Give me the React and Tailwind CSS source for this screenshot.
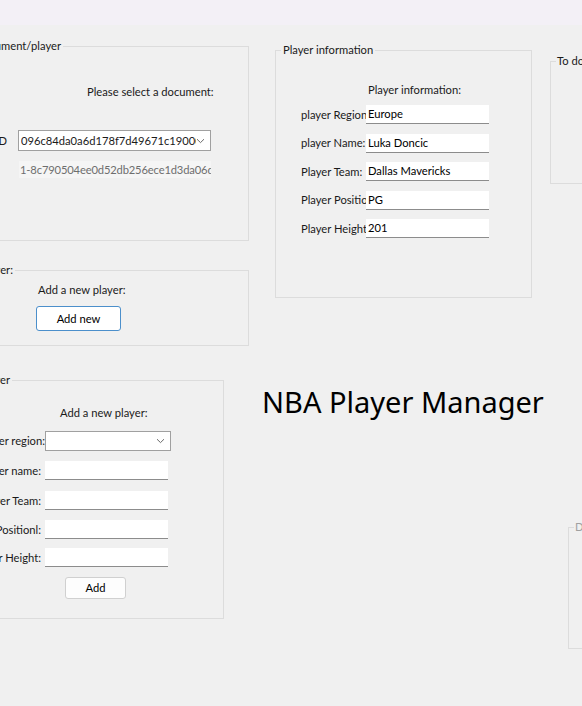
import React from "react";

const font = { fontFamily: 'Lato, "Noto Sans", sans-serif' };
const titleFont = { fontFamily: '"Noto Sans", "Open Sans", sans-serif' };

function Chevron() {
  return (
    <svg width="9" height="6" viewBox="0 0 9 6" className="shrink-0">
      <path d="M1 1.2 L4.5 4.6 L8 1.2" fill="none" stroke="#6b6b6b" strokeWidth="1" />
    </svg>
  );
}

function TextBox({ value = "", w = "w-[123px]" }) {
  return (
    <div className={`${w} h-[19px] bg-white border-b border-[#8c8c8c] pl-[2px] text-[11.2px] leading-[18px] text-black whitespace-nowrap overflow-hidden`}>
      {value}
    </div>
  );
}

function Legend({ ml, w, children, color = "" }) {
  return (
    <legend className={`${ml} p-0`}>
      <div className={`${w} pr-[2px] text-right whitespace-nowrap ${color}`}>{children}</div>
    </legend>
  );
}

export default function App() {
  return (
    <div className="w-[582px] h-[706px] overflow-hidden bg-[#f0f0f0] text-[11.2px] leading-[16px] text-[#1a1a1a]" style={font}>
      <div className="h-[25px] bg-[#f3f0f6]" />
      <div className="flex items-start">
        {/* Left column */}
        <div className="shrink-0 ml-[-80px] w-[329px] flex flex-col">
          {/* Document/player */}
          <fieldset className="mt-[13px] h-[203px] w-[329px] border border-[#dcdcdc]">
            <Legend ml="ml-[22px]" w="w-[120px]">Document/player</Legend>
            <div className="ml-[166px] mt-[30px] whitespace-nowrap">Please select a document:</div>
            <div className="mt-[30px] flex items-center">
              <div className="w-[97px] pr-[11px] text-right whitespace-nowrap">Player ID</div>
              <div className="w-[193px] h-[21px] bg-white border border-[#a0a0a0] flex items-center pl-[2px] pr-[5px]">
                <span className="w-[178px] overflow-hidden whitespace-nowrap text-clip">096c84da0a6d178f7d49671c19000b</span>
                <span className="flex-1" />
                <Chevron />
              </div>
            </div>
            <div className="ml-[98px] mt-[10px] w-[192px] h-[17px] bg-[#f5f5f5] text-[#6e6e6e] pl-[1px] leading-[17px] tracking-[-0.15px] overflow-hidden whitespace-nowrap">
              1-8c790504ee0d52db256ece1d3da06d
            </div>
          </fieldset>

          {/* Add new player */}
          <fieldset className="mt-[21px] h-[84px] w-[329px] border border-[#dcdcdc]">
            <Legend ml="ml-[22px]" w="w-[72px]">New player:</Legend>
            <div className="ml-[117px] mt-[4px] whitespace-nowrap">Add a new player:</div>
            <button className="ml-[115px] mt-[8px] w-[85px] h-[25px] bg-white border border-[#4b8fcb] rounded-[3px] text-[11.2px] leading-[16px] text-black">
              Add new
            </button>
          </fieldset>

          {/* Add player */}
          <fieldset className="mt-[26px] h-[247px] w-[304px] border border-[#dcdcdc]">
            <Legend ml="ml-[22px]" w="w-[69px]">Add player</Legend>
            <div className="ml-[139px] mt-[17px] whitespace-nowrap">Add a new player:</div>
            <div className="mt-[10px] flex items-center">
              <div className="w-[124px] text-right whitespace-nowrap">Player region:</div>
              <div className="w-[126px] h-[20px] bg-white border border-[#a0a0a0] flex items-center justify-end pr-[5px]">
                <Chevron />
              </div>
            </div>
            {[
              ["Player name:", "mt-[10px]"],
              ["Player Team:", "mt-[11px]"],
              ["Player Positionl:", "mt-[10px]"],
              ["Player Height:", "mt-[9px]"],
            ].map(([label, mt]) => (
              <div key={label} className={`${mt} flex items-center`}>
                <div className="w-[124px] pr-[4px] text-right whitespace-nowrap">{label}</div>
                <TextBox />
              </div>
            ))}
            <button className="ml-[144px] mt-[10px] w-[61px] h-[22px] bg-[#fdfdfd] border border-[#d0d0d0] rounded-[3px] text-[11.2px] leading-[16px] text-black">
              Add
            </button>
          </fieldset>
        </div>

        {/* Middle column */}
        <div className="shrink-0 ml-[26px] w-[257px] flex flex-col">
          <fieldset className="mt-[17px] h-[256px] w-[257px] border border-[#dcdcdc]">
            <legend className="ml-[5px] px-[2px] whitespace-nowrap">Player information</legend>
            <div className="ml-[92px] mt-[24px] whitespace-nowrap">Player information:</div>
            <div className="mt-[7px] flex flex-col gap-[9.5px]">
              {[
                ["player Region:", "Europe"],
                ["player Name:", "Luka Doncic"],
                ["Player Team:", " Dallas Mavericks"],
                ["Player Position:", "PG"],
                ["Player Height:", "201"],
              ].map(([label, value]) => (
                <div key={label} className="flex items-center ml-[25px]">
                  <div className="w-[65px] overflow-hidden whitespace-nowrap">{label}</div>
                  <TextBox value={value} />
                </div>
              ))}
            </div>
          </fieldset>
          <div className="ml-[-13px] mt-[84px] text-[29px] leading-[40px] text-black whitespace-nowrap" style={titleFont}>
            NBA Player Manager
          </div>
        </div>

        {/* Right column */}
        <div className="shrink-0 ml-[18px] w-[80px] flex flex-col">
          <fieldset className="mt-[28px] h-[131px] w-[80px] border border-[#dcdcdc]">
            <legend className="ml-[5px] px-[1px] whitespace-nowrap">To do list</legend>
          </fieldset>
          <fieldset className="ml-[18px] mt-[335px] h-[130px] w-[80px] border border-[#dcdcdc]">
            <legend className="ml-[5px] px-[1px] whitespace-nowrap text-[#a0a0a0]">Done</legend>
          </fieldset>
        </div>
      </div>
    </div>
  );
}
